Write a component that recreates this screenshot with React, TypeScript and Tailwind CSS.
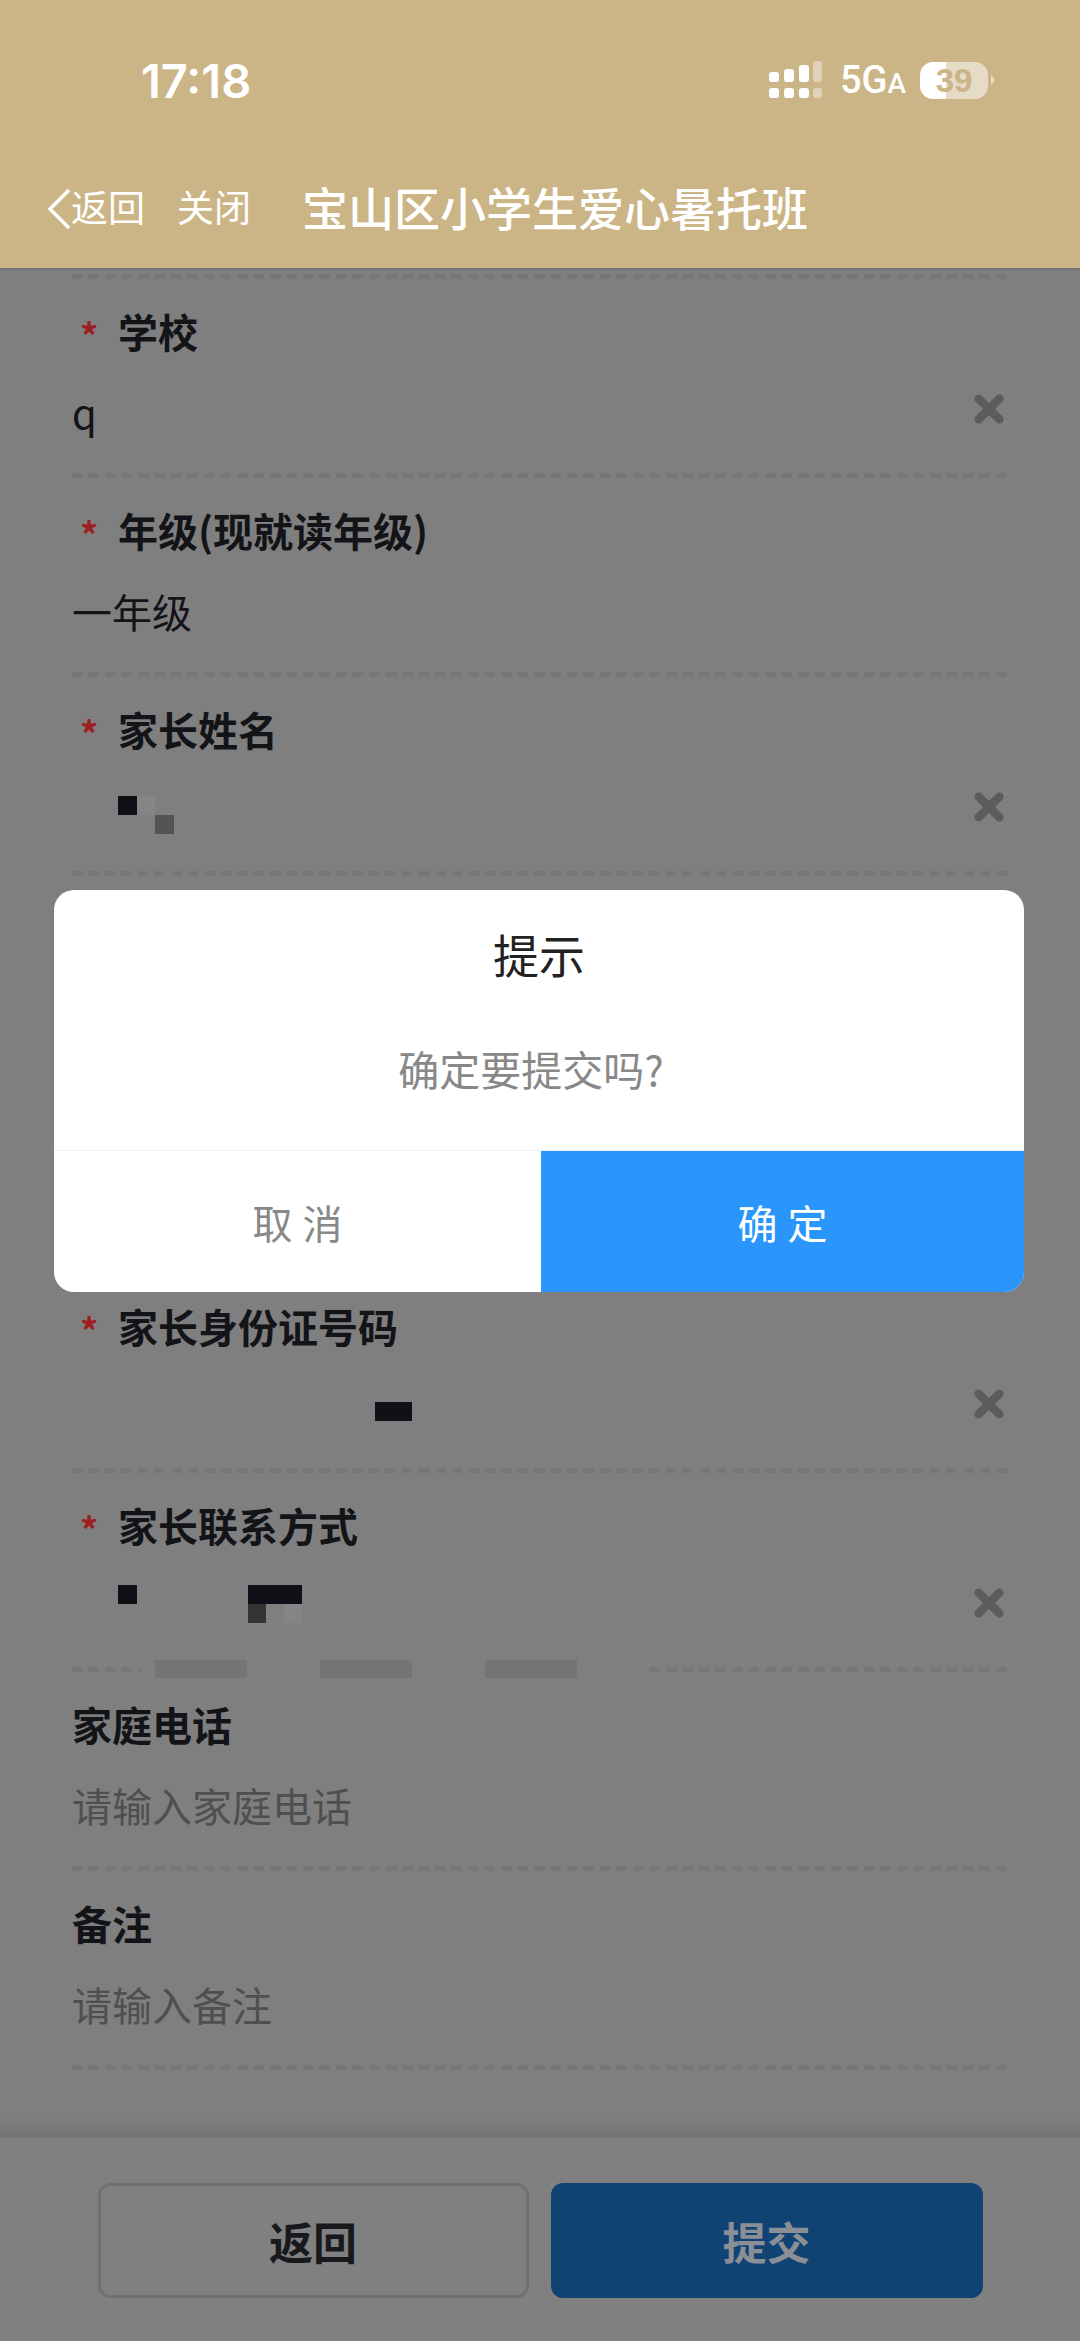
const font = { fontFamily: '"Noto Sans CJK SC", "Liberation Sans", sans-serif' }

function ClearIcon() {
  return (
    <svg width="32" height="32" viewBox="0 0 34 34" className="shrink-0 -translate-y-[3px]" aria-hidden="true">
      <path d="M6 6 L28 28 M28 6 L6 28" stroke="#5c5c5c" strokeWidth="9" strokeLinecap="round" />
    </svg>
  )
}

function Dash() {
  return (
    <div className="mx-[72px] h-[5px] bg-[repeating-linear-gradient(90deg,#777777_0_11px,transparent_11px_16.5px)]" />
  )
}

type FieldProps = {
  label: string
  value?: string
  placeholder?: string
  required?: boolean
  clearable?: boolean
  children?: React.ReactNode
}

function Field({ label, value, placeholder, required, clearable, children }: FieldProps) {
  return (
    <div className="relative flex h-[199px] flex-col">
      <div className="mt-[25px] flex h-[54px] items-center px-[72px] text-[40px] font-bold leading-none text-[#131418]">
        {required && <span className="mr-[24px] w-[22px] translate-y-[3px] pl-[8px] text-[36px] text-[#9d2020]">*</span>}
        {label}
      </div>
      <div className="mt-[21px] flex h-[60px] items-center justify-between pt-[6px] pl-[72px] pr-[75px] text-[40px] leading-none">
        {placeholder ? (
          <span className="text-[#4f4f4f]">{placeholder}</span>
        ) : (
          <span className="text-[#131418]">{value}</span>
        )}
        {clearable && <ClearIcon />}
      </div>
      <div className="mt-auto">
        <Dash />
      </div>
      {children}
    </div>
  )
}

export default function App() {
  return (
    <div className="relative flex h-[2341px] w-[1080px] flex-col overflow-hidden bg-[#7f7f7f]" style={font}>
      <header className="flex h-[268px] shrink-0 flex-col bg-[#cbb586] text-white">
        <div className="flex h-[124px] items-end justify-between pl-[141px] pr-[85px]">
          <span className="pb-[20px] text-[47px] font-semibold leading-none" style={{ fontFamily: 'Inter, sans-serif' }}>
            17:18
          </span>
          <div className="flex items-center gap-[14px] pb-[25px]">
            <svg width="54" height="38" viewBox="0 0 54 38" fill="white" className="mr-[3px]" aria-hidden="true">
              <rect x="0" y="11" width="10" height="10" rx="3" />
              <rect x="15" y="8" width="10" height="13" rx="3" />
              <rect x="30" y="4" width="10" height="17" rx="3" />
              <rect x="44" y="0" width="9" height="21" rx="3" opacity="0.4" />
              <rect x="0" y="27" width="10" height="10" rx="3" />
              <rect x="15" y="27" width="10" height="10" rx="3" />
              <rect x="30" y="27" width="10" height="10" rx="3" />
              <rect x="44" y="27" width="9" height="10" rx="3" opacity="0.4" />
            </svg>
            <div className="flex items-baseline font-medium leading-none" style={{ fontFamily: 'Roboto, sans-serif' }}>
              <span className="text-[38px]">5G</span>
              <span className="text-[28px]">A</span>
            </div>
            <div className="flex items-center gap-[3px]">
              <div className="flex h-[37px] w-[68px] items-center justify-center rounded-[13px] bg-[linear-gradient(90deg,#ffffff_0_38%,#e6dcc6_38%_100%)] text-[33px] font-bold leading-none text-[#cbb586]" style={{ fontFamily: '"Liberation Sans", sans-serif' }}>
                39
              </div>
              <svg width="4" height="10" viewBox="0 0 4 10" aria-hidden="true">
                <path d="M0 0 L4 5 L0 10 Z" fill="#e6dcc6" />
              </svg>
            </div>
          </div>
        </div>
        <div className="mt-[39px] flex h-[86px] items-center pl-[47px]">
          <svg width="24" height="40" viewBox="0 0 24 40" fill="none" className="translate-y-[3px]" aria-hidden="true">
            <path d="M22 1 L3 20 L22 39" stroke="white" strokeWidth="3.5" />
          </svg>
          <span className="text-[37px] leading-none">返回</span>
          <span className="ml-[32px] text-[37px] leading-none">关闭</span>
          <span className="ml-[51px] text-[46px] font-medium leading-none">宝山区小学生爱心暑托班</span>
        </div>
      </header>

      <main className="min-h-0 flex-1 overflow-hidden border-t-[2px] border-[#747474]">
        <div className="pt-[4px]">
          <Dash />
        </div>
        <Field label="学校" value="q" required clearable />
        <Field label="年级(现就读年级)" value="一年级" required />
        <Field label="家长姓名" required clearable>
          <div className="absolute left-[118px] top-[119px] h-[19px] w-[19px] bg-[#101116]" />
          <div className="absolute left-[137px] top-[119px] h-[19px] w-[18px] bg-[#858585]" />
          <div className="absolute left-[155px] top-[138px] h-[19px] w-[19px] bg-[#545454]" />
        </Field>
        <div className="h-[398px]" />
        <Field label="家长身份证号码" required clearable>
          <div className="absolute left-[375px] top-[128px] h-[19px] w-[37px] bg-[#101116]" />
        </Field>
        <Field label="家长联系方式" required clearable>
          <div className="absolute left-[118px] top-[112px] h-[19px] w-[19px] bg-[#101116]" />
          <div className="absolute left-[248px] top-[112px] h-[19px] w-[54px] bg-[#101116]" />
          <div className="absolute left-[248px] top-[131px] h-[19px] w-[18px] bg-[#333333]" />
          <div className="absolute left-[284px] top-[131px] h-[19px] w-[18px] bg-[#858585]" />
          <div className="absolute bottom-0 left-[141px] h-[18px] w-[506px] translate-y-[6px] bg-[#7f7f7f]" />
          <div className="absolute bottom-0 left-[155px] h-[18px] w-[92px] translate-y-[6px] bg-[#757575]" />
          <div className="absolute bottom-0 left-[320px] h-[18px] w-[92px] translate-y-[6px] bg-[#757575]" />
          <div className="absolute bottom-0 left-[485px] h-[18px] w-[92px] translate-y-[6px] bg-[#757575]" />
        </Field>
        <Field label="家庭电话" placeholder="请输入家庭电话" />
        <Field label="备注" placeholder="请输入备注" />
      </main>

      <div className="h-[24px] shrink-0 bg-[linear-gradient(180deg,#7f7f7f,#747474)]" />
      <footer className="flex h-[203px] shrink-0 items-start justify-center gap-[22px] bg-[#808080] pt-[45px]">
        <button className="flex h-[115px] w-[431px] items-center justify-center rounded-[12px] border-[3px] border-[#707070] text-[44px] font-bold text-[#18191c]">
          返回
        </button>
        <button className="flex h-[115px] w-[432px] items-center justify-center rounded-[12px] bg-[#114274] text-[44px] font-bold text-[#8a8f96]">
          提交
        </button>
      </footer>

      <div className="absolute left-[54px] top-[890px] flex h-[402px] w-[970px] flex-col overflow-hidden rounded-[20px] bg-white">
        <div className="flex h-[261px] flex-col items-center border-b-[1px] border-[#f1f1f1]">
          <div className="mt-[37px] text-[46px] leading-[52px] text-[#222222]">提示</div>
          <div className="mt-[65px] -translate-x-[8px] text-[41px] leading-[48px] text-[#888888]">确定要提交吗?</div>
        </div>
        <div className="flex flex-1 text-[40px]">
          <div className="flex w-[487px] items-center justify-center pl-[10px] tracking-[10px] text-[#888888]">取消</div>
          <div className="flex flex-1 items-center justify-center bg-[#2a96fc] pl-[10px] tracking-[10px] text-white">确定</div>
        </div>
      </div>
    </div>
  )
}
